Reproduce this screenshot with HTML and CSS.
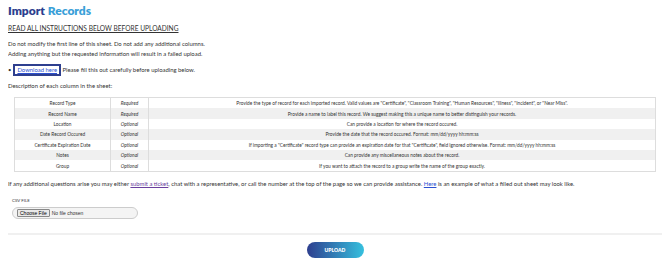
FILE: index.html
```html
<!DOCTYPE html>
<html lang="en">

<head>
    <meta charset="UTF-8">
    <title>Import Records</title>
    <link rel="stylesheet" href="styles.css">
</head>

<body>

    <h1 class="title"><span class="title-dark">Import</span> <span class="title-light">Records</span></h1>

    <h2 class="warning">READ ALL INSTRUCTIONS BELOW BEFORE UPLOADING</h2>

    <p class="note">
        Do not modify the first line of this sheet. Do not add any additional columns.<br>
        Adding anything but the requested information will result in a failed upload.
    </p>

    <ul class="links">
        <li><a href="#" class="download">Download here</a> Please fill this out carefully before uploading below.</li>
    </ul>

    <p class="note desc">Description of each column in the sheet:</p>

    <table class="columns">
        <tr>
            <td class="col-name">Record Type</td>
            <td class="col-req">Required</td>
            <td class="col-desc">Provide the type of record for each imported record. Valid values are "Certificate", "Classroom Training", "Human Resources", "Illness", "Incident", or "Near Miss".</td>
        </tr>
        <tr>
            <td class="col-name">Record Name</td>
            <td class="col-req">Required</td>
            <td class="col-desc">Provide a name to label this record. We suggest making this a unique name to better distinguish your records.</td>
        </tr>
        <tr>
            <td class="col-name">Location</td>
            <td class="col-req">Optional</td>
            <td class="col-desc">Can provide a location for where the record occured.</td>
        </tr>
        <tr>
            <td class="col-name">Date Record Occured</td>
            <td class="col-req">Optional</td>
            <td class="col-desc">Provide the date that the record occured. Format: mm/dd/yyyy hh:mm:ss</td>
        </tr>
        <tr>
            <td class="col-name">Certificate Expiration Date</td>
            <td class="col-req">Optional</td>
            <td class="col-desc">If importing a "Certificate" record type can provide an expiration date for that "Certificate", field ignored otherwise. Format: mm/dd/yyyy hh:mm:ss</td>
        </tr>
        <tr>
            <td class="col-name">Notes</td>
            <td class="col-req">Optional</td>
            <td class="col-desc">Can provide any miscellaneous notes about the record.</td>
        </tr>
        <tr>
            <td class="col-name">Group</td>
            <td class="col-req">Optional</td>
            <td class="col-desc">If you want to attach the record to a group write the name of the group exactly.</td>
        </tr>
    </table>

    <p class="note help">If any additional questions arise you may either <a href="#" class="visited">submit a ticket</a>, chat with a representative, or call the number at the top of the page so we can provide assistance. <a href="#">Here</a> is an example of what a filled out sheet may look like.</p>

    <form class="upload-form">
        <label class="field-label" for="csv">CSV FILE</label>
        <div class="file-pill">
            <input type="file" id="csv">
        </div>
        <hr class="divider">
        <div class="actions">
            <button type="button" class="upload-btn">UPLOAD</button>
        </div>
    </form>

</body></html>
```

FILE: styles.css
```css
body {
    margin: 0 8px;
    font-family: Lato, "Open Sans", sans-serif;
    color: #333;
    background: #fff;
}

.title {
    margin: 4px 0 0;
    font-size: 12px;
    font-weight: 800;
    line-height: 14px;
}

.title-dark {
    color: #2e3f8f;
}

.title-light {
    color: #3a9fd8;
}

.warning {
    margin: 6px 0 0;
    font-size: 6.6px;
    font-weight: 400;
    line-height: 8px;
    text-decoration: underline;
    color: #333;
}

.note {
    margin: 7px 0 0;
    font-size: 5.9px;
    line-height: 10px;
}

.links {
    margin: 5px 0 0;
    padding: 0;
    list-style: none;
    font-size: 5.9px;
    line-height: 12px;
}

.links li::before {
    content: "\2022";
    margin-right: 2px;
}

.download {
    display: inline-block;
    padding: 0 2px;
    border: 2px solid #2e3f8f;
    line-height: 8px;
    color: #2b50d0;
}

.desc {
    margin-top: 5px;
}

.columns {
    width: calc(100% - 12px);
    margin: 6px 6px 0;
    border-collapse: collapse;
    border: 1px solid #ddd;
    font-size: 4.8px;
}

.columns td {
    height: 10.4px;
    padding: 0;
    line-height: 6px;
    text-align: center;
    border-right: 1px solid #ddd;
}

.columns tr:nth-child(even) {
    background: #f0f0f0;
}

.col-name {
    width: 95px;
}

.col-req {
    width: 37px;
    font-style: italic;
}

.help {
    margin-top: 7px;
}

a {
    color: #2b50d0;
}

a.visited {
    color: #6a3f9e;
}

.upload-form {
    margin-top: 9px;
}

.field-label {
    display: block;
    margin-left: 4px;
    font-size: 4.4px;
    line-height: 6px;
}

.file-pill {
    display: flex;
    align-items: center;
    box-sizing: border-box;
    width: 126px;
    height: 12px;
    margin: 3px 0 0 4px;
    padding: 0 4px;
    border: 1px solid #ccc;
    border-radius: 6px;
    background: #f4f4f4;
}

.file-pill input {
    height: 8px;
    padding: 0;
    font-family: "Liberation Sans", sans-serif;
    font-size: 5px;
    line-height: 8px;
}

.file-pill input::file-selector-button {
    height: 8px;
    font-family: "Liberation Sans", sans-serif;
    font-size: 5px;
    padding: 0 2px;
    margin-right: 2px;
    border: 1px solid #888;
    border-radius: 1px;
    background: #e9e9e9;
}

.divider {
    margin: 14px 0 0;
    border: 0;
    border-top: 2px solid #f0f0f0;
}

.actions {
    display: flex;
    justify-content: center;
    margin-top: 7px;
}

.upload-btn {
    width: 57px;
    height: 16px;
    border: 0;
    border-radius: 8px;
    background: linear-gradient(to right, #2e3f8f, #36c0de);
    color: #fff;
    font-family: Lato, sans-serif;
    font-size: 5px;
    font-weight: 800;
}
```
